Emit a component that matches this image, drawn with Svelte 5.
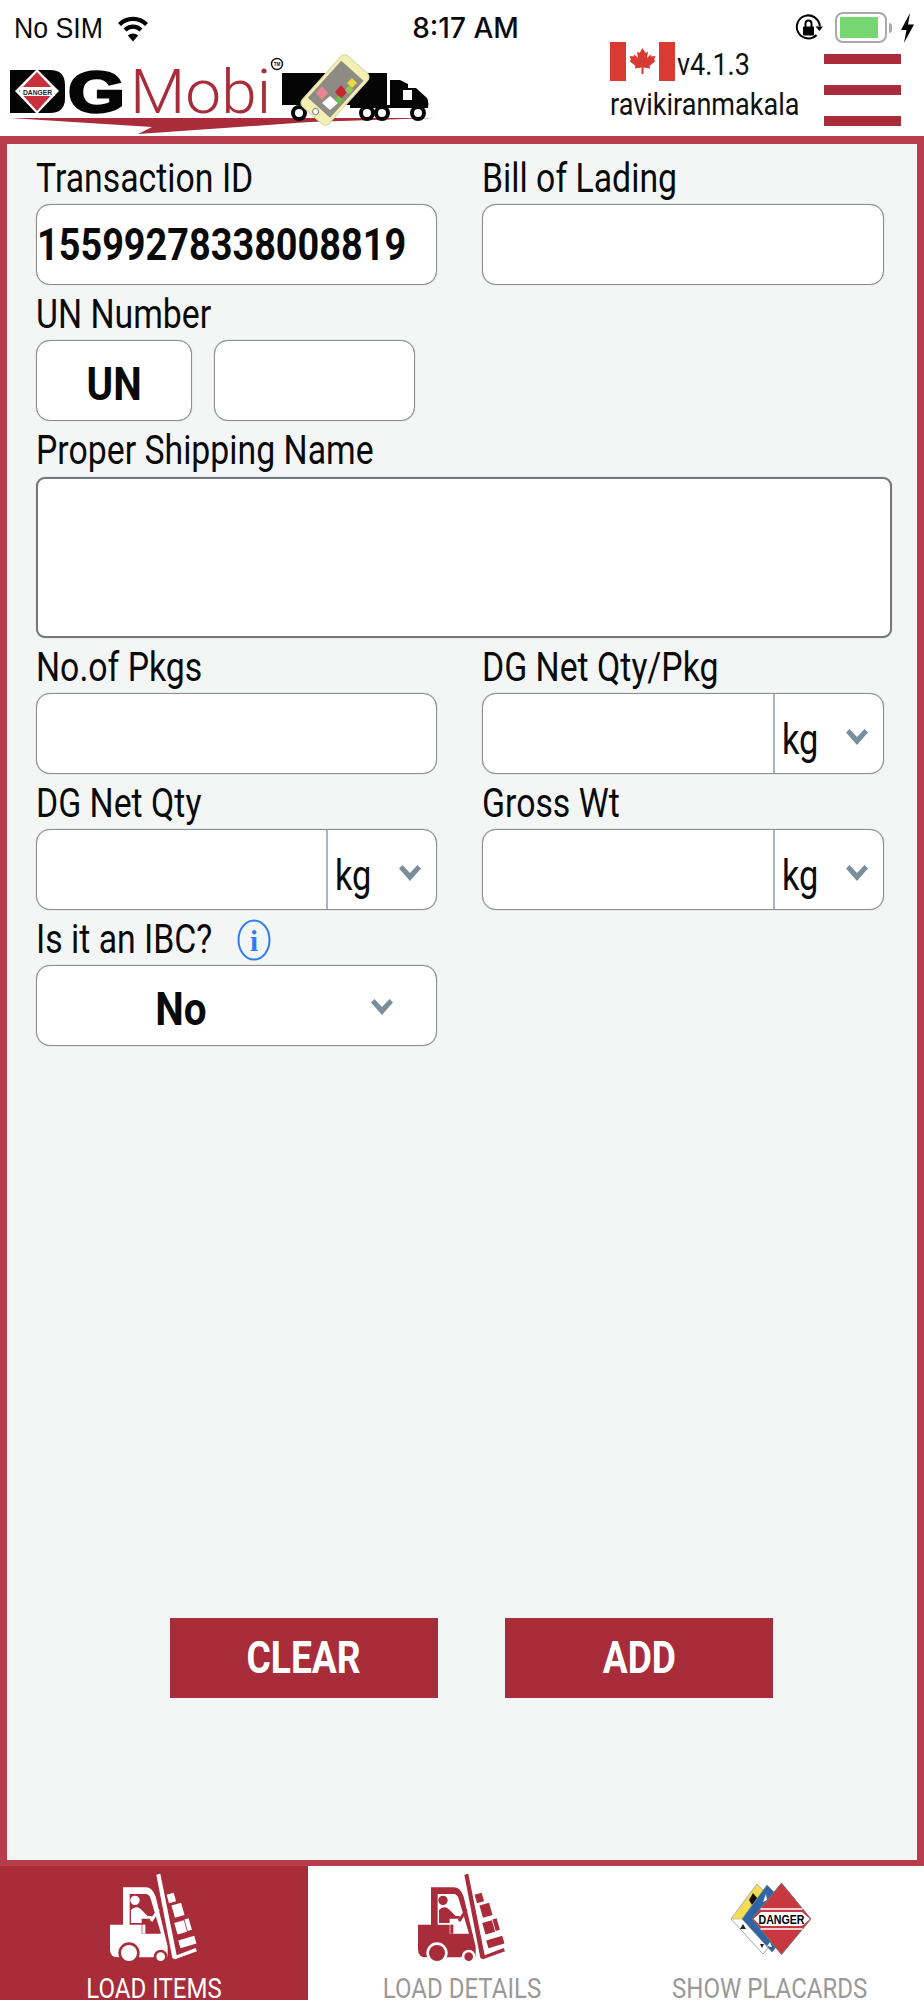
<script>
  const red = '#a82c3a';
  const boxes = [
    [206, 77, 22, 26],
    [222, 108, 30, 38],
    [230, 160, 30, 36],
    [261, 152, 13, 36],
    [240, 210, 50, 24]
  ];
</script>

{#snippet forklift(fg, bg)}
  <svg class="icon" viewBox="0 0 330 300" width="110" height="100" aria-hidden="true">
    <path fill={fg} d="M72 58 H140 Q160 58 170 86 L206 236 V268 H60 Q33 268 33 245 V170 H72 Z" />
    <path fill={bg} d="M92 78 H140 Q150 78 155 92 L186 197 H128 V170 H92 Z" />
    <path fill={fg} d="M172 20 L184 17 L233 262 L290 240 L294 250 L228 274 L220 270 Z" />
    <circle cx="108" cy="97" r="14" fill={fg} />
    <path fill={fg} d="M96 126 Q108 112 124 122 L146 144 H158 V152 H128 V165 H96 Z" />
    <rect x="130" y="170" width="9" height="27" fill={fg} />
    <path fill={fg} d="M152 156 L176 122 L182 127 L160 162 Z" />
    {#each boxes as [x, y, w, h]}
      <rect {x} {y} width={w} height={h} fill={fg} transform="rotate(-16 {x + w / 2} {y + h / 2})" />
    {/each}
    <circle cx="90" cy="255" r="32" fill={bg} />
    <circle cx="90" cy="255" r="24" fill={fg} />
    <circle cx="185" cy="266" r="21" fill={bg} />
    <circle cx="185" cy="266" r="13" fill={fg} />
  </svg>
{/snippet}

{#snippet chevron()}
  <svg class="chev" viewBox="0 0 22 16" width="22" height="16" aria-hidden="true">
    <polygon points="0,3.5 3.5,0 11,8 18.5,0 22,3.5 11,16" fill="#7b8e9e" />
  </svg>
{/snippet}

{#snippet qty(label)}
  <div class="field">
    <div class="lbl"><span class="sq">{label}</span></div>
    <div class="box split">
      <div class="val"></div>
      <div class="unit"><span class="sq kg">kg</span>{@render chevron()}</div>
    </div>
  </div>
{/snippet}

<div class="page">
  <header class="top">
    <div class="status">
      <div class="st-left">
        <span class="sq st-text">No SIM</span>
        <svg class="wifi" viewBox="0 0 32 28" width="32" height="28" aria-hidden="true">
          <path d="M2.5 10.5 C10 3 22 3 29.5 10.5" fill="none" stroke="#000" stroke-width="4.2" />
          <path d="M8 16 C12.5 11.5 19.5 11.5 24 16" fill="none" stroke="#000" stroke-width="4.2" />
          <path d="M16 27.5 L10.8 21.5 C13.5 18.8 18.5 18.8 21.2 21.5 Z" fill="#000" />
        </svg>
      </div>
      <span class="time">8:17 AM</span>
      <div class="st-right">
        <svg viewBox="0 0 28 28" width="28" height="28" aria-hidden="true">
          <path d="M21.5 21 A11.5 11.5 0 1 1 24.8 12.5" fill="none" stroke="#000" stroke-width="2" />
          <path d="M20.5 12.5 H28 L24.5 17 Z" fill="#000" />
          <rect x="8" y="12.5" width="11" height="9" rx="1" fill="#000" />
          <path d="M10.5 13 V9.5 A3 3 0 0 1 16.5 9.5 V13" fill="none" stroke="#000" stroke-width="2" />
        </svg>
        <div class="battery"><div class="charge"></div></div>
        <div class="nub"></div>
        <svg viewBox="0 0 15 30" width="15" height="30" aria-hidden="true">
          <path d="M10 0 L1 17 H6.5 L4 30 L14 11.5 H8 Z" fill="#000" />
        </svg>
      </div>
    </div>

    <div class="brand">
      <svg class="logo" viewBox="0 42 440 94" width="440" height="94" role="img" aria-label="DG Mobi">
        <path d="M10 70 H50 Q65 70 65 85 V98 Q65 113 50 113 H10 Z" fill="#050505" />
        <path d="M37 69 L59 91 L37 114 L15 91 Z" fill="#fff" />
        <path d="M37 72 L55 91 L37 111 L19 91 Z" fill="#c8313c" />
        <rect x="20" y="87" width="35" height="9" fill="#fff" />
        <text x="23" y="94.5" class="lg-danger" textLength="29" lengthAdjust="spacingAndGlyphs">DANGER</text>
        <text x="68" y="112" class="lg-g" textLength="57" lengthAdjust="spacingAndGlyphs">G</text>
        <text x="130" y="113" class="lg-mobi" textLength="141" lengthAdjust="spacingAndGlyphs">Mobi</text>
        <circle cx="277" cy="64" r="5.5" fill="#fff" stroke="#111" stroke-width="1.4" />
        <text x="277" y="66" class="lg-tm">TM</text>
        <path d="M10 118 H435 L310 122 L138 134 L152 127 Z" fill={red} />
        <rect x="282" y="73" width="105" height="32" fill="#050505" />
        <path d="M390 80 H400 L408 84 V88 H416 L427 98 Q429 102 428 108 H390 Z" fill="#050505" />
        <rect x="403" y="90" width="9" height="10" fill="#fff" />
        <rect x="350" y="105" width="60" height="3" fill="#050505" />
        {#each [299, 367, 382, 418] as cx}
          <circle {cx} cy="113" r="6" fill="#fff" stroke="#050505" stroke-width="4" />
        {/each}
        <g transform="rotate(42 335 90)">
          <rect x="317" y="56" width="36" height="68" rx="5" fill="#f4efb4" stroke="#dcd6a0" />
          <rect x="320" y="64" width="30" height="50" fill="#8d8c84" />
          <circle cx="335" cy="119" r="3" fill="#fff" stroke="#8d8c84" />
        </g>
        <path d="M322 86 L328 93 L322 100 L316 93 Z" fill="#e8858f" />
        <path d="M341 85 L347 92 L341 99 L335 92 Z" fill="#c9262e" />
        <path d="M330 96 L338 103 L330 110 L322 103 Z" fill="#fff" />
        <path d="M352 78 L357 83 L352 88 L347 83 Z" fill="#ecd93c" />
        <rect x="336" y="97" width="6" height="6" fill="#6fbe4a" transform="rotate(42 339 100)" />
        <rect x="346" y="87" width="6" height="6" fill="#8fc75a" transform="rotate(42 349 90)" />
      </svg>

      <div class="acct">
        <div class="ver">
          <svg class="flag" viewBox="0 0 65 39" width="65" height="39" role="img" aria-label="Canada">
            <rect width="16" height="39" fill="#d93a32" />
            <rect x="49" width="16" height="39" fill="#d93a32" />
            <g transform="translate(32.5 19)" fill="#d93a32">
              <path d="M0 -13 L3 -8 L5.5 -9.5 L4.5 -3 L8 -6.5 L9 -4.5 L13 -5 L11.5 -1 L13 0 L7 5 L7.8 7.5 L1 6.5 L1 13 L-1 13 L-1 6.5 L-7.8 7.5 L-7 5 L-13 0 L-11.5 -1 L-13 -5 L-9 -4.5 L-8 -6.5 L-4.5 -3 L-5.5 -9.5 L-3 -8 Z" />
            </g>
          </svg>
          <span class="sq acct-t">v4.1.3</span>
        </div>
        <div class="sq acct-t user">ravikiranmakala</div>
      </div>

      <div class="menu" aria-label="Menu">
        <span></span><span></span><span></span>
      </div>
    </div>
  </header>

  <main class="frame">
    <div class="grid">
      <div class="field">
        <div class="lbl"><span class="sq">Transaction ID</span></div>
        <div class="box"><span class="sq num">15599278338008819</span></div>
      </div>
      <div class="field">
        <div class="lbl"><span class="sq">Bill of Lading</span></div>
        <div class="box"></div>
      </div>

      <div class="field wide">
        <div class="lbl"><span class="sq">UN Number</span></div>
        <div class="un-row">
          <div class="box un strong-box"><span class="sqc strong">UN</span></div>
          <div class="box un-num"></div>
        </div>
      </div>

      <div class="field wide">
        <div class="lbl"><span class="sq">Proper Shipping Name</span></div>
        <div class="area"></div>
      </div>

      <div class="field">
        <div class="lbl"><span class="sq">No.of Pkgs</span></div>
        <div class="box"></div>
      </div>
      {@render qty('DG Net Qty/Pkg')}
      {@render qty('DG Net Qty')}
      {@render qty('Gross Wt')}

      <div class="field">
        <div class="lbl ibc">
          <span class="sq ibc-t">Is it an IBC?</span>
          <svg class="info" viewBox="0 0 34 42" width="34" height="42" aria-hidden="true">
            <ellipse cx="17" cy="21" rx="15.5" ry="19.5" fill="none" stroke="#2e7cf6" stroke-width="2" />
            <text x="17" y="32" class="info-i">i</text>
          </svg>
        </div>
        <div class="box sel">
          <span class="sel-val strong-box"><span class="sqc strong">No</span></span>
          {@render chevron()}
        </div>
      </div>
    </div>

    <div class="actions">
      <button class="btn"><span class="sqc">CLEAR</span></button>
      <button class="btn"><span class="sqc">ADD</span></button>
    </div>
  </main>

  <nav class="tabs">
    <div class="tab active">
      <div class="tab-ic">{@render forklift('#fff', red)}</div>
      <span class="sqc tab-t">LOAD ITEMS</span>
    </div>
    <div class="tab">
      <div class="tab-ic">{@render forklift(red, '#fff')}</div>
      <span class="sqc tab-t">LOAD DETAILS</span>
    </div>
    <div class="tab">
      <div class="tab-ic">
        <svg class="icon" viewBox="0 0 90 85" width="90" height="85" aria-hidden="true">
          <path d="M32 8 L67 43 L38 78 L6 43 Z" fill="#fff" stroke="#a8a8a8" stroke-width="1" />
          <path d="M32 8 L67 43 H6 Z" fill="#f4dd52" stroke="#a8a8a8" stroke-width=".6" />
          <path d="M28 17 L33 23 L27 29 L24 24 Z" fill="#111" />
          <path d="M18 48 L21 53 H15 Z" fill="#222" />
          <path d="M35 68 H39 L37 72 Z" fill="#222" />
          <path d="M42 9 L76 43 L47 76 L17 43 Z" fill="#2f64a6" stroke="#8e8e8e" stroke-width=".8" />
          <path d="M41 18 L42 24 L38 26 Z" fill="#fff" />
          <path d="M45 66 L47 71 L42 70 Z" fill="#fff" />
          <path d="M56.5 7 L86 43 L56.5 78.5 L27 43 Z" fill="#c8383f" stroke="#777" stroke-width="1" />
          <path d="M28.5 43 L36 36 H77 L85 43 L77 50 H36 Z" fill="#fff" />
          <path d="M35.5 33 H77.5 M35.5 53 H77.5" stroke="#fff" stroke-width="1.4" />
          <text x="33.5" y="48" class="pl-t" textLength="46" lengthAdjust="spacingAndGlyphs">DANGER</text>
        </svg>
      </div>
      <span class="sqc tab-t">SHOW PLACARDS</span>
    </div>
  </nav>
</div>

<style>
  :global(body) {
    margin: 0;
    background: #fff;
  }
  .page {
    width: 924px;
    height: 2000px;
    display: flex;
    flex-direction: column;
    overflow: hidden;
    font-family: Roboto, "Liberation Sans", sans-serif;
    color: #0a0a0a;
  }
  .sq,
  .sqc {
    display: inline-block;
    white-space: nowrap;
    transform: scaleX(0.845);
  }
  .sq {
    transform-origin: left center;
  }
  .sqc {
    transform-origin: center;
  }

  .top {
    flex: none;
    height: 136px;
    background: #fff;
  }
  .status {
    height: 42px;
    display: grid;
    grid-template-columns: 1fr auto 1fr;
    align-items: center;
    padding: 12px 9px 0 14px;
    box-sizing: border-box;
  }
  .st-left {
    display: flex;
    align-items: center;
  }
  .st-text {
    font: 400 30px "Liberation Sans", sans-serif;
    line-height: 28px;
    width: 103px;
    transform: scaleX(0.89);
  }
  .time {
    font: 500 28px Inter, sans-serif;
    line-height: 28px;
    margin-left: 2px;
    display: inline-block;
  }
  .st-right {
    display: flex;
    align-items: center;
    justify-content: flex-end;
  }
  .st-right > svg:first-child {
    margin-right: 12px;
  }
  .battery {
    width: 52px;
    height: 31px;
    box-sizing: border-box;
    border: 2px solid #a9a9a9;
    border-radius: 8px;
    padding: 3px;
  }
  .charge {
    width: 38px;
    height: 100%;
    background: #76d672;
  }
  .nub {
    width: 3px;
    height: 10px;
    background: #a9a9a9;
    margin: 0 8px 0 2px;
    border-radius: 0 3px 3px 0;
  }

  .brand {
    height: 94px;
    display: flex;
    align-items: flex-start;
  }
  .logo {
    display: block;
    flex: none;
  }
  .lg-danger {
    font: 700 6.6px "Liberation Sans", sans-serif;
    fill: #222;
  }
  .lg-g {
    font: 700 57px "Liberation Sans", sans-serif;
    fill: #050505;
    stroke: #050505;
    stroke-width: 2.5px;
  }
  .lg-mobi {
    font: 300 62px Roboto, sans-serif;
    fill: #a82c3a;
  }
  .lg-tm {
    font: 700 4.6px "Liberation Sans", sans-serif;
    text-anchor: middle;
    fill: #111;
  }
  .acct {
    width: 214px;
    margin-left: 170px;
    flex: none;
  }
  .ver {
    display: flex;
    align-items: flex-start;
    height: 39px;
  }
  .flag {
    flex: none;
  }
  .acct-t {
    font-size: 32px;
    line-height: 38px;
    color: #111;
  }
  .ver .acct-t {
    margin-left: 2px;
    padding-top: 3px;
  }
  .user {
    display: block;
    padding-top: 4px;
  }
  .menu {
    width: 77px;
    flex: none;
    display: flex;
    flex-direction: column;
    gap: 21px;
    padding-top: 12px;
  }
  .menu span {
    display: block;
    height: 10px;
    background: #a82c3a;
  }

  .frame {
    flex: 1;
    min-height: 0;
    display: flex;
    flex-direction: column;
    justify-content: space-between;
    background: #f4f6f5;
    border: solid #b83d4c;
    border-width: 8px 7px 6px;
    padding: 5px 0 162px 29px;
  }
  .grid {
    display: grid;
    grid-template-columns: 401px 402px;
    column-gap: 45px;
  }
  .field {
    display: flex;
    flex-direction: column;
  }
  .wide {
    grid-column: 1 / -1;
  }
  .lbl {
    display: block;
    height: 55px;
    font-size: 40px;
    line-height: 59px;
  }
  .box {
    height: 81px;
    box-sizing: border-box;
    background: #fff;
    border: 1px solid #8e8e8e;
    box-shadow: 0 0 1px rgba(0, 0, 0, 0.4);
    border-radius: 14px;
    display: flex;
    align-items: center;
  }
  .num {
    font-size: 45px;
    font-weight: 700;
    line-height: 1;
    margin-left: 0;
    transform: scaleX(0.841);
  }
  .un-row {
    display: flex;
    gap: 22px;
  }
  .un {
    width: 156px;
    justify-content: center;
  }
  .un-num {
    width: 201px;
  }
  .strong-box {
    padding-top: 5px;
    box-sizing: border-box;
  }
  .strong {
    font-size: 47px;
    font-weight: 700;
    line-height: 1;
    transform: scaleX(0.86);
  }
  .area {
    width: 856px;
    height: 161px;
    margin-top: 1px;
    box-sizing: border-box;
    background: #fff;
    border: 2px solid #77777b;
    box-shadow: 0 0 1px rgba(0, 0, 0, 0.4);
    border-radius: 9px;
  }
  .split {
    align-items: stretch;
  }
  .val {
    flex: 1;
  }
  .unit {
    width: 110px;
    flex: none;
    box-sizing: border-box;
    border-left: 2px solid #a9b6c2;
    display: flex;
    align-items: center;
    padding: 10px 0 0 7px;
  }
  .kg {
    font-size: 43px;
    width: 64px;
    line-height: 60px;
    transform: scaleX(0.8);
  }
  .chev {
    flex: none;
  }
  .unit .chev {
    margin-top: -4px;
  }
  .ibc {
    display: flex;
    align-items: flex-start;
  }
  .ibc-t {
    width: 201px;
  }
  .info {
    flex: none;
    margin-top: 9px;
  }
  .info-i {
    font: 700 29px "Liberation Serif", serif;
    fill: #2e7cf6;
    text-anchor: middle;
  }
  .sel-val {
    width: 288px;
    text-align: center;
    flex: none;
  }
  .sel .chev {
    margin-left: 46px;
    margin-top: 3px;
  }

  .actions {
    display: flex;
    gap: 67px;
    padding-left: 134px;
  }
  .btn {
    width: 268px;
    height: 80px;
    border: 0;
    padding: 0;
    background: #a82c3a;
    color: #fff;
    font: 700 44px Roboto, sans-serif;
  }

  .tabs {
    flex: none;
    height: 134px;
    display: grid;
    grid-template-columns: repeat(3, 1fr);
    background: #fff;
  }
  .tab {
    display: flex;
    flex-direction: column;
    align-items: center;
    padding-top: 2px;
    color: #999;
  }
  .tab.active {
    background: #a82c3a;
    color: #fff;
  }
  .tab-ic {
    flex: none;
    height: 100px;
    display: flex;
    align-items: center;
    justify-content: center;
  }
  .icon {
    display: block;
  }
  .tab-t {
    flex: none;
    font-size: 27px;
    line-height: 22px;
    transform: scaleX(0.89);
    margin-top: 10px;
  }
  .pl-t {
    font: 700 13.5px "Liberation Sans", sans-serif;
    fill: #000;
  }
</style>
